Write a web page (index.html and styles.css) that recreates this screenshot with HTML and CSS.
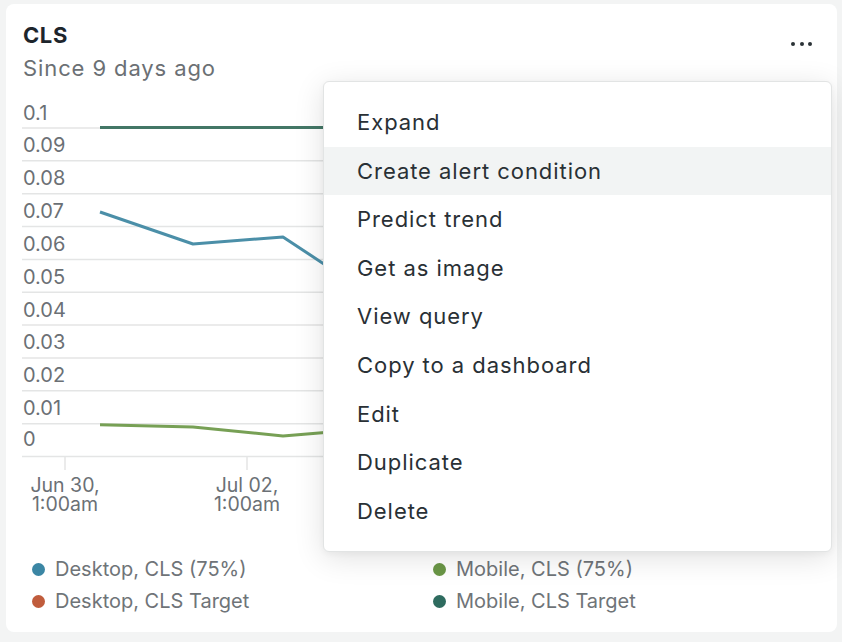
FILE: index.html
```html
<!DOCTYPE html>
<html lang="en">
<head>
<meta charset="utf-8">
<title>CLS</title>
<link rel="stylesheet" href="styles.css">
</head>
<body>
<section class="card">
  <header class="card-header">
    <div class="titles">
      <h2 class="title">CLS</h2>
      <p class="subtitle">Since 9 days ago</p>
    </div>
    <button class="more" aria-label="More actions"><span></span><span></span><span></span></button>
  </header>

  <svg class="chart" width="831" height="430" viewBox="0 0 831 430">
    <g class="grid">
      <line x1="16" x2="819" y1="38" y2="38"/>
      <line x1="16" x2="819" y1="70.85" y2="70.85"/>
      <line x1="16" x2="819" y1="103.7" y2="103.7"/>
      <line x1="16" x2="819" y1="136.55" y2="136.55"/>
      <line x1="16" x2="819" y1="169.4" y2="169.4"/>
      <line x1="16" x2="819" y1="202.25" y2="202.25"/>
      <line x1="16" x2="819" y1="235.1" y2="235.1"/>
      <line x1="16" x2="819" y1="267.95" y2="267.95"/>
      <line x1="16" x2="819" y1="300.8" y2="300.8"/>
      <line x1="16" x2="819" y1="333.65" y2="333.65"/>
      <line x1="16" x2="819" y1="366.5" y2="366.5"/>
      <line x1="59" x2="59" y1="366.5" y2="380"/>
      <line x1="241" x2="241" y1="366.5" y2="380"/>
      <line x1="423" x2="423" y1="366.5" y2="380"/>
      <line x1="605" x2="605" y1="366.5" y2="380"/>
      <line x1="787" x2="787" y1="366.5" y2="380"/>
    </g>
    <g class="ylabels">
      <text x="17" y="29.5">0.1</text>
      <text x="17" y="62.35">0.09</text>
      <text x="17" y="95.2">0.08</text>
      <text x="17" y="128.05">0.07</text>
      <text x="17" y="160.9">0.06</text>
      <text x="17" y="193.75">0.05</text>
      <text x="17" y="226.6">0.04</text>
      <text x="17" y="259.45">0.03</text>
      <text x="17" y="292.3">0.02</text>
      <text x="17" y="325.15">0.01</text>
      <text x="17" y="356">0</text>
    </g>
    <g class="xlabels">
      <text x="59" y="401.7">Jun 30,</text>
      <text x="59" y="420.7">1:00am</text>
      <text x="241" y="401.7">Jul 02,</text>
      <text x="241" y="420.7">1:00am</text>
    </g>
    <polyline class="s-desktop-target" points="94,37.5 820,37.5"/>
    <polyline class="s-desktop" points="94,122 187,154 277,147 316,172.7 368,206"/>
    <polyline class="s-mobile" points="94,334.7 187,337 277,346 316,342.7 368,338.3"/>
    <polyline class="s-mobile-target" points="94,37.5 820,37.5"/>
  </svg>

  <ul class="legend">
    <li><i class="dot dot-desktop"></i>Desktop, CLS (75%)</li>
    <li><i class="dot dot-mobile"></i>Mobile, CLS (75%)</li>
    <li><i class="dot dot-desktop-target"></i>Desktop, CLS Target</li>
    <li><i class="dot dot-mobile-target"></i>Mobile, CLS Target</li>
  </ul>

  <ul class="menu" role="menu">
    <li>Expand</li>
    <li class="active">Create alert condition</li>
    <li>Predict trend</li>
    <li>Get as image</li>
    <li>View query</li>
    <li>Copy to a dashboard</li>
    <li>Edit</li>
    <li>Duplicate</li>
    <li>Delete</li>
  </ul>
</section>
</body>
</html>
```

FILE: styles.css
```css
* { box-sizing: border-box; }

html, body {
  margin: 0;
  padding: 0;
}

body {
  background: #f3f4f4;
  font-family: Inter, "Noto Sans", "Liberation Sans", sans-serif;
  width: 842px;
  height: 642px;
  overflow: hidden;
}

.card {
  position: relative;
  margin: 4px 0 0 6px;
  width: 831px;
  height: 628px;
  background: #ffffff;
  border-radius: 8px;
}

.card-header {
  display: flex;
  justify-content: space-between;
  align-items: flex-start;
  padding: 17px 25px 0 17px;
}

.title {
  margin: 0;
  font-size: 22px;
  line-height: 28px;
  font-weight: 700;
  letter-spacing: 0.6px;
  color: #1d252c;
}

.subtitle {
  margin: 5px 0 0;
  font-size: 22px;
  line-height: 28px;
  letter-spacing: 0.9px;
  color: #6b7074;
}

.more {
  display: flex;
  align-items: center;
  gap: 4.3px;
  height: 28px;
  margin-top: 9px;
  padding: 0;
  border: 0;
  background: transparent;
}

.more span {
  width: 4px;
  height: 4px;
  border-radius: 50%;
  background: #2b3236;
}

.chart {
  display: block;
  margin-top: 8px;
}

.grid line {
  stroke: #e4e5e5;
  stroke-width: 1.5;
}

.ylabels text,
.xlabels text {
  font-family: Inter, "Noto Sans", sans-serif;
  font-size: 20px;
  fill: #6b7075;
}

.xlabels text {
  text-anchor: middle;
  font-size: 19.5px;
}

.chart polyline {
  fill: none;
  stroke-width: 3;
  stroke-linejoin: round;
}

.s-desktop { stroke: #4b8fa8; }
.s-mobile { stroke: #77a055; }
.s-desktop-target { stroke: #c05c3c; }
.s-mobile-target { stroke: #437766; }

.legend {
  list-style: none;
  margin: 33px 0 0;
  padding: 0 0 0 26px;
  display: grid;
  grid-template-columns: 401px 1fr;
  font-size: 20px;
  line-height: 32px;
  color: #6f7478;
}

.legend li {
  display: flex;
  align-items: center;
  gap: 10px;
}

.dot {
  width: 13px;
  height: 13px;
  border-radius: 50%;
  flex: none;
}

.dot-desktop { background: #3b86a4; }
.dot-mobile { background: #6a9646; }
.dot-desktop-target { background: #c05c3c; }
.dot-mobile-target { background: #2e6b5f; }

.menu {
  position: absolute;
  left: 317px;
  top: 77px;
  width: 509px;
  margin: 0;
  padding: 16px 0;
  list-style: none;
  background: #ffffff;
  border: 1px solid #e2e4e4;
  border-radius: 6px;
  box-shadow: 0 6px 30px rgba(0, 0, 0, 0.12), 0 2px 6px rgba(0, 0, 0, 0.04);
}

.menu li {
  padding-left: 33px;
  font-size: 22px;
  line-height: 48.6px;
  letter-spacing: 0.95px;
  color: #293035;
}

.menu li.active {
  background: #f2f4f4;
}
```
